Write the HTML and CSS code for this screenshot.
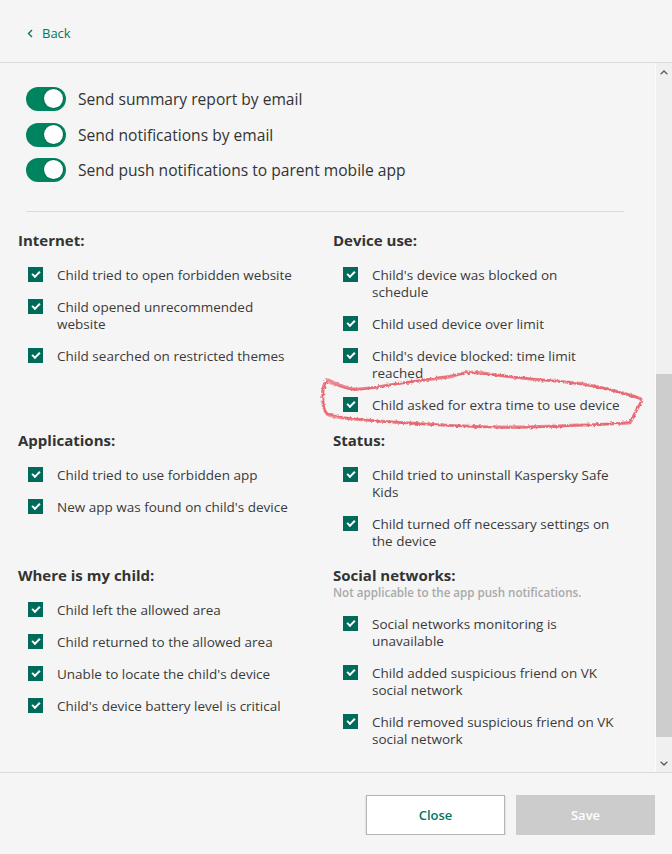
FILE: index.html
```html
<!DOCTYPE html>
<html lang="en">
<head>
    <meta charset="UTF-8">
    <meta name="viewport" content="width=device-width, initial-scale=1.0">
    <title>Notification settings</title>
    <link rel="stylesheet" href="styles.css">
</head>
<body>
    <div class="header">
        <a class="back" href="#">
            <svg width="6" height="9" viewBox="0 0 6 9"><path d="M5 1 L1.5 4.5 L5 8" fill="none" stroke="#00775e" stroke-width="1.4"/></svg>
            <span>Back</span>
        </a>
    </div>

    <div class="main">
        <div class="content">
            <div class="toggles">
                <label class="toggle-row"><span class="toggle"></span>Send summary report by email</label>
                <label class="toggle-row"><span class="toggle"></span>Send notifications by email</label>
                <label class="toggle-row"><span class="toggle"></span>Send push notifications to parent mobile app</label>
            </div>

            <hr class="separator">

            <div class="groups">
                <div class="group">
                    <h3>Internet:</h3>
                    <ul>
                        <li><span class="check"></span><span>Child tried to open forbidden website</span></li>
                        <li><span class="check"></span><span>Child opened unrecommended<br>website</span></li>
                        <li><span class="check"></span><span>Child searched on restricted themes</span></li>
                    </ul>
                </div>
                <div class="group">
                    <h3>Device use:</h3>
                    <ul>
                        <li><span class="check"></span><span>Child's device was blocked on<br>schedule</span></li>
                        <li><span class="check"></span><span>Child used device over limit</span></li>
                        <li><span class="check"></span><span>Child's device blocked: time limit<br>reached</span></li>
                        <li><span class="check"></span><span>Child asked for extra time to use device</span></li>
                    </ul>
                </div>
                <div class="group">
                    <h3>Applications:</h3>
                    <ul>
                        <li><span class="check"></span><span>Child tried to use forbidden app</span></li>
                        <li><span class="check"></span><span>New app was found on child's device</span></li>
                    </ul>
                </div>
                <div class="group">
                    <h3>Status:</h3>
                    <ul>
                        <li><span class="check"></span><span>Child tried to uninstall Kaspersky Safe<br>Kids</span></li>
                        <li><span class="check"></span><span>Child turned off necessary settings on<br>the device</span></li>
                    </ul>
                </div>
                <div class="group">
                    <h3>Where is my child:</h3>
                    <ul>
                        <li><span class="check"></span><span>Child left the allowed area</span></li>
                        <li><span class="check"></span><span>Child returned to the allowed area</span></li>
                        <li><span class="check"></span><span>Unable to locate the child's device</span></li>
                        <li><span class="check"></span><span>Child's device battery level is critical</span></li>
                    </ul>
                </div>
                <div class="group">
                    <h3>Social networks:</h3>
                    <p class="note">Not applicable to the app push notifications.</p>
                    <ul class="after-note">
                        <li><span class="check"></span><span>Social networks monitoring is<br>unavailable</span></li>
                        <li><span class="check"></span><span>Child added suspicious friend on VK<br>social network</span></li>
                        <li><span class="check"></span><span>Child removed suspicious friend on VK<br>social network</span></li>
                    </ul>
                </div>
            </div>

            <!-- hand-drawn marker over the screenshot -->
            <svg class="marker" width="334" height="64" viewBox="0 0 334 64">
                <defs>
                    <filter id="rough" x="-5%" y="-20%" width="110%" height="140%">
                        <feTurbulence type="fractalNoise" baseFrequency="0.35" numOctaves="2" seed="4" result="noise"/>
                        <feDisplacementMap in="SourceGraphic" in2="noise" scale="3.5"/>
                        <feGaussianBlur stdDeviation="0.4"/>
                    </filter>
                </defs>
                <g fill="none" stroke="#e2404f" stroke-linejoin="round" stroke-linecap="round" filter="url(#rough)">
                    <path stroke-width="3" stroke-opacity="0.6"
                          d="M12 10 C22 14 30 19 38 19 C48 19 54 18 61 17 C74 15 84 13 94 12 C110 10 122 8 134 7 C142 5 148 2 154 2 C164 2 172 4 181 5 C196 7 212 9 227 10 C240 11 250 12 261 13 C270 14 278 16 287 18 C297 20 306 23 314 25 C320 27 325 28 326 30 C326 32 325 33 324 34 C322 37 320 40 319 43 C317 47 316 50 314 53 C296 54 280 55 261 55 C240 56 216 57 194 57 C172 57 150 56 127 55 C110 54 94 53 77 52 C60 51 44 50 27 48 C20 47 14 46 11 44 C8 40 7 36 7 32 C7 27 6 22 7 18 C8 14 10 11 12 10"/>
                    <path stroke-width="1.8" stroke-opacity="0.45"
                          d="M10 12 C20 15 30 20 40 20 C60 18 80 14 100 11 C120 8 140 4 156 3 C190 6 230 10 262 14 C290 18 310 24 325 29 C324 38 318 46 313 52 C280 56 230 57 190 58 C150 57 100 54 60 51 C40 49 20 47 10 43 C6 35 6 22 10 12"/>
                </g>
            </svg>
        </div>

        <div class="scrollbar">
            <div class="arrow"><svg width="8" height="6" viewBox="0 0 8 6"><path d="M0 5 L4 1 L8 5 L6.6 5.6 L4 3 L1.4 5.6 Z" fill="#5f5f5f"/></svg></div>
            <div class="track"><div class="thumb"></div></div>
            <div class="arrow"><svg width="8" height="6" viewBox="0 0 8 6"><path d="M0 1 L4 5 L8 1 L6.6 0.4 L4 3 L1.4 0.4 Z" fill="#5f5f5f"/></svg></div>
        </div>
    </div>

    <div class="footer">
        <button class="btn btn-close">Close</button>
        <button class="btn btn-save" disabled>Save</button>
    </div>
</body>
</html>
```

FILE: styles.css
```css
body {
    font-family: "Open Sans", sans-serif;
    background-color: #f5f5f5;
    color: #333;
    margin: 0;
}

.header {
    height: 62px;
    border-bottom: 1px solid #dcdcdc;
    display: flex;
    align-items: center;
    padding-left: 27px;
}

.back {
    display: flex;
    align-items: center;
    gap: 9px;
    color: #00775e;
    font-size: 13px;
    text-decoration: none;
    margin-top: 4px;
}

.main {
    display: flex;
    height: 709px;
}

.content {
    flex: 1;
    position: relative;
    overflow: hidden;
    border-right: 1px solid #fbfbfb;
}

.toggles {
    display: flex;
    flex-direction: column;
    gap: 11.5px;
    padding: 24px 0 0 26px;
}

.toggle-row {
    display: flex;
    align-items: center;
    gap: 12px;
    font-size: 15.6px;
    line-height: 24px;
    color: #333;
}

.toggle {
    position: relative;
    width: 40px;
    height: 24px;
    border-radius: 12px;
    background-color: #00845f;
}

.toggle::after {
    content: "";
    position: absolute;
    right: 3px;
    top: 2px;
    width: 19px;
    height: 19px;
    border-radius: 50%;
    background-color: #fff;
    box-shadow: 0 0 1px 1px rgba(0, 0, 0, 0.15);
}

.separator {
    border: none;
    border-top: 1px solid #dcdcdc;
    margin: 29px 31px 0 26px;
}

.groups {
    display: grid;
    grid-template-columns: 315px 1fr;
    row-gap: 15.5px;
    padding: 18px 0 0 18px;
}

.group h3 {
    margin: 0;
    font-size: 15px;
    line-height: 20px;
    font-weight: 700;
    color: #333;
}

.note {
    margin: 0;
    font-size: 11.6px;
    line-height: 16px;
    font-weight: 600;
    color: #a9a9a9;
}

.group ul {
    list-style: none;
    margin: 17px 0 0 0;
    padding: 0 0 0 10px;
    display: flex;
    flex-direction: column;
    gap: 15px;
}

.group ul.after-note {
    margin-top: 15px;
}

.group li {
    display: flex;
    align-items: flex-start;
    gap: 14px;
    font-size: 13.5px;
    line-height: 17px;
    color: #3a3a3a;
}

.check {
    position: relative;
    flex: none;
    width: 15px;
    height: 15px;
    background-color: #006b5a;
}

.check::after {
    content: "";
    position: absolute;
    left: 4px;
    top: 4px;
    width: 6px;
    height: 3px;
    border-left: 2px solid #fff;
    border-bottom: 2px solid #fff;
    transform: rotate(-45deg);
}

.marker {
    position: absolute;
    left: 316px;
    top: 307px;
}

.scrollbar {
    width: 16px;
    display: flex;
    flex-direction: column;
    background-color: #f0f0f0;
}

.arrow {
    height: 17px;
    display: flex;
    align-items: center;
    justify-content: center;
}

.track {
    flex: 1;
    padding-top: 294px;
}

.thumb {
    height: 363px;
    background-color: #cdcdcd;
}

.footer {
    border-top: 1px solid #dcdcdc;
    display: flex;
    justify-content: flex-end;
    gap: 11px;
    padding: 22px 17px 0 0;
}

.btn {
    width: 139px;
    height: 40px;
    font-family: "Open Sans", sans-serif;
    font-size: 13px;
    font-weight: 600;
    border: none;
    cursor: pointer;
}

.btn-close {
    background-color: #fff;
    color: #00775e;
    border: 1px solid #b5b5b5;
    box-shadow: 0 1px 2px rgba(0, 0, 0, 0.2);
}

.btn-save {
    background-color: #cccccc;
    color: #fff;
}
```
